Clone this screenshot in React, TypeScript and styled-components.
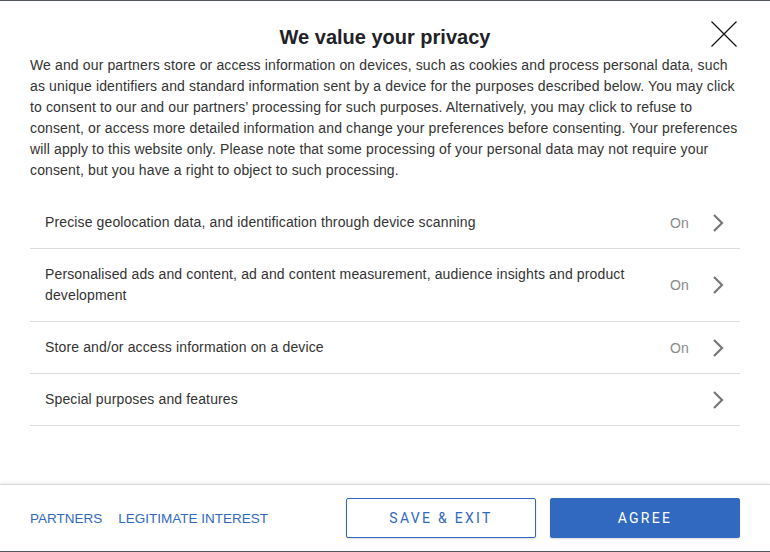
import styled, { createGlobalStyle } from 'styled-components';

const GlobalStyle = createGlobalStyle`
  html, body {
    margin: 0;
    padding: 0;
    background: #ffffff;
  }
  body {
    font-family: 'Liberation Sans', Arial, sans-serif;
  }
`;

const purposes = [
  { label: 'Precise geolocation data, and identification through device scanning', on: true },
  {
    label:
      'Personalised ads and content, ad and content measurement, audience insights and product development',
    on: true,
  },
  { label: 'Store and/or access information on a device', on: true },
  { label: 'Special purposes and features', on: false },
];

const StyledDialog = styled.div`
  box-sizing: border-box;
  width: 770px;
  height: 552px;
  border-top: 1px solid #50555b;
  border-bottom: 1px solid #50555b;
  display: flex;
  flex-direction: column;
  background: #ffffff;
`;

const Content = styled.div`
  flex: 1;
  padding: 0 30px;
`;

const Header = styled.div`
  position: relative;
  padding: 22px 0 4px;
  text-align: center;
`;

const Title = styled.h1`
  margin: 0;
  font-size: 20px;
  line-height: 28px;
  font-weight: 700;
  color: #1f2327;
`;

const CloseButton = styled.button`
  position: absolute;
  top: 20px;
  right: 3px;
  width: 26px;
  height: 26px;
  padding: 0;
  border: none;
  background: none;
  display: flex;
`;

const Intro = styled.p`
  margin: 0;
  font-size: 14px;
  line-height: 21px;
  letter-spacing: 0.13px;
  color: #333333;
`;

const PurposeList = styled.ul`
  list-style: none;
  margin: 16px 0 0;
  padding: 0;
`;

const PurposeRow = styled.li`
  display: flex;
  align-items: center;
  padding: 15px 15px;
  border-bottom: 1px solid #dcdcdc;
`;

const PurposeLabel = styled.span`
  flex: 1;
  padding-right: 40px;
  font-size: 14px;
  line-height: 21px;
  letter-spacing: 0.13px;
  color: #333333;
`;

const Status = styled.span<{ $visible: boolean }>`
  width: 22px;
  margin-right: 19px;
  font-size: 14px;
  letter-spacing: 0.2px;
  color: #8a8a8a;
  visibility: ${(p) => (p.$visible ? 'visible' : 'hidden')};
`;

const Footer = styled.div`
  height: 67px;
  box-sizing: border-box;
  border-top: 1px solid #d8d8d8;
  box-shadow: 0 -2px 3px rgba(0, 0, 0, 0.06);
  padding: 0 30px;
  display: flex;
  align-items: center;
`;

const Links = styled.div`
  flex: 1;
  display: flex;
  gap: 16px;
`;

const TextLink = styled.a`
  font-size: 13.5px;
  color: #3169c0;
  text-decoration: none;
  text-transform: uppercase;
`;

const Button = styled.button<{ $primary?: boolean }>`
  box-sizing: border-box;
  width: 190px;
  height: 40px;
  border-radius: 2px;
  border: 1px solid #3169c0;
  background: ${(p) => (p.$primary ? '#3169c0' : '#ffffff')};
  color: ${(p) => (p.$primary ? '#ffffff' : '#3169c0')};
  font-family: Roboto, 'Liberation Sans', sans-serif;
  font-size: 14px;
  letter-spacing: 2.3px;
  box-shadow: 0 1px 2px rgba(0, 0, 0, 0.15);
  & + & {
    margin-left: 14px;
  }
`;

const Chevron = () => (
  <svg width="14" height="20" viewBox="0 0 14 20">
    <path d="M3 2 L11 10 L3 18" fill="none" stroke="#777777" strokeWidth="2.2" />
  </svg>
);

const App = () => {
  return (
    <StyledDialog>
      <GlobalStyle />
      <Content>
        <Header>
          <Title>We value your privacy</Title>
          <CloseButton aria-label="Close">
            <svg width="26" height="26" viewBox="0 0 26 26">
              <path d="M0.5 0.5 L25.5 25.5 M25.5 0.5 L0.5 25.5" stroke="#111111" strokeWidth="1.2" />
            </svg>
          </CloseButton>
        </Header>
        <Intro>
          We and our partners store or access information on devices, such as cookies and process
          personal data, such as unique identifiers and standard information sent by a device for the
          purposes described below. You may click to consent to our and our partners’ processing for
          such purposes. Alternatively, you may click to refuse to consent, or access more detailed
          information and change your preferences before consenting. Your preferences will apply to
          this website only. Please note that some processing of your personal data may not require
          your consent, but you have a right to object to such processing.
        </Intro>
        <PurposeList>
          {purposes.map((p) => (
            <PurposeRow key={p.label}>
              <PurposeLabel>{p.label}</PurposeLabel>
              <Status $visible={p.on}>On</Status>
              <Chevron />
            </PurposeRow>
          ))}
        </PurposeList>
      </Content>
      <Footer>
        <Links>
          <TextLink href="#">Partners</TextLink>
          <TextLink href="#">Legitimate interest</TextLink>
        </Links>
        <Button>SAVE &amp; EXIT</Button>
        <Button $primary>AGREE</Button>
      </Footer>
    </StyledDialog>
  );
};

export default App;
